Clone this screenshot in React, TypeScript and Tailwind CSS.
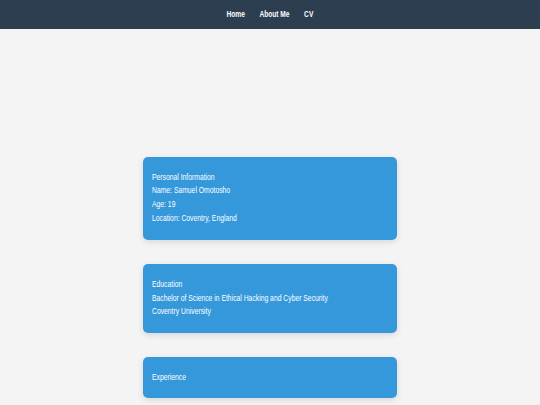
import React from "react";

const Card = ({ lines }: { lines: string[] }) => (
  <div className="w-[254px] rounded-[5px] bg-[#3498db] px-[9px] py-[13.5px] shadow-[0_2px_6px_rgba(0,0,0,0.12)]">
    <div className="origin-left scale-x-[0.79] text-[8.6px] leading-[13.9px] text-white whitespace-nowrap">
      {lines.map((l) => (
        <div key={l}>{l}</div>
      ))}
    </div>
  </div>
);

export default function App() {
  return (
    <div className="min-h-[405px] bg-[#f4f4f4] font-['Liberation_Sans',Arial,sans-serif]">
      <nav className="flex h-[29px] items-center justify-center bg-[#2c3e50] pl-[0px]">
        <div className="flex scale-x-[0.75] items-center gap-[19.5px] whitespace-nowrap text-[8.8px] font-bold text-white">
          <span>Home</span>
          <span>About Me</span>
          <span>CV</span>
        </div>
      </nav>
      <main className="flex flex-col items-center gap-[24.5px] pt-[128px]">
        <Card
          lines={[
            "Personal Information",
            "Name: Samuel Omotosho",
            "Age: 19",
            "Location: Coventry, England",
          ]}
        />
        <Card
          lines={[
            "Education",
            "Bachelor of Science in Ethical Hacking and Cyber Security",
            "Coventry University",
          ]}
        />
        <Card lines={["Experience"]} />
      </main>
    </div>
  );
}
